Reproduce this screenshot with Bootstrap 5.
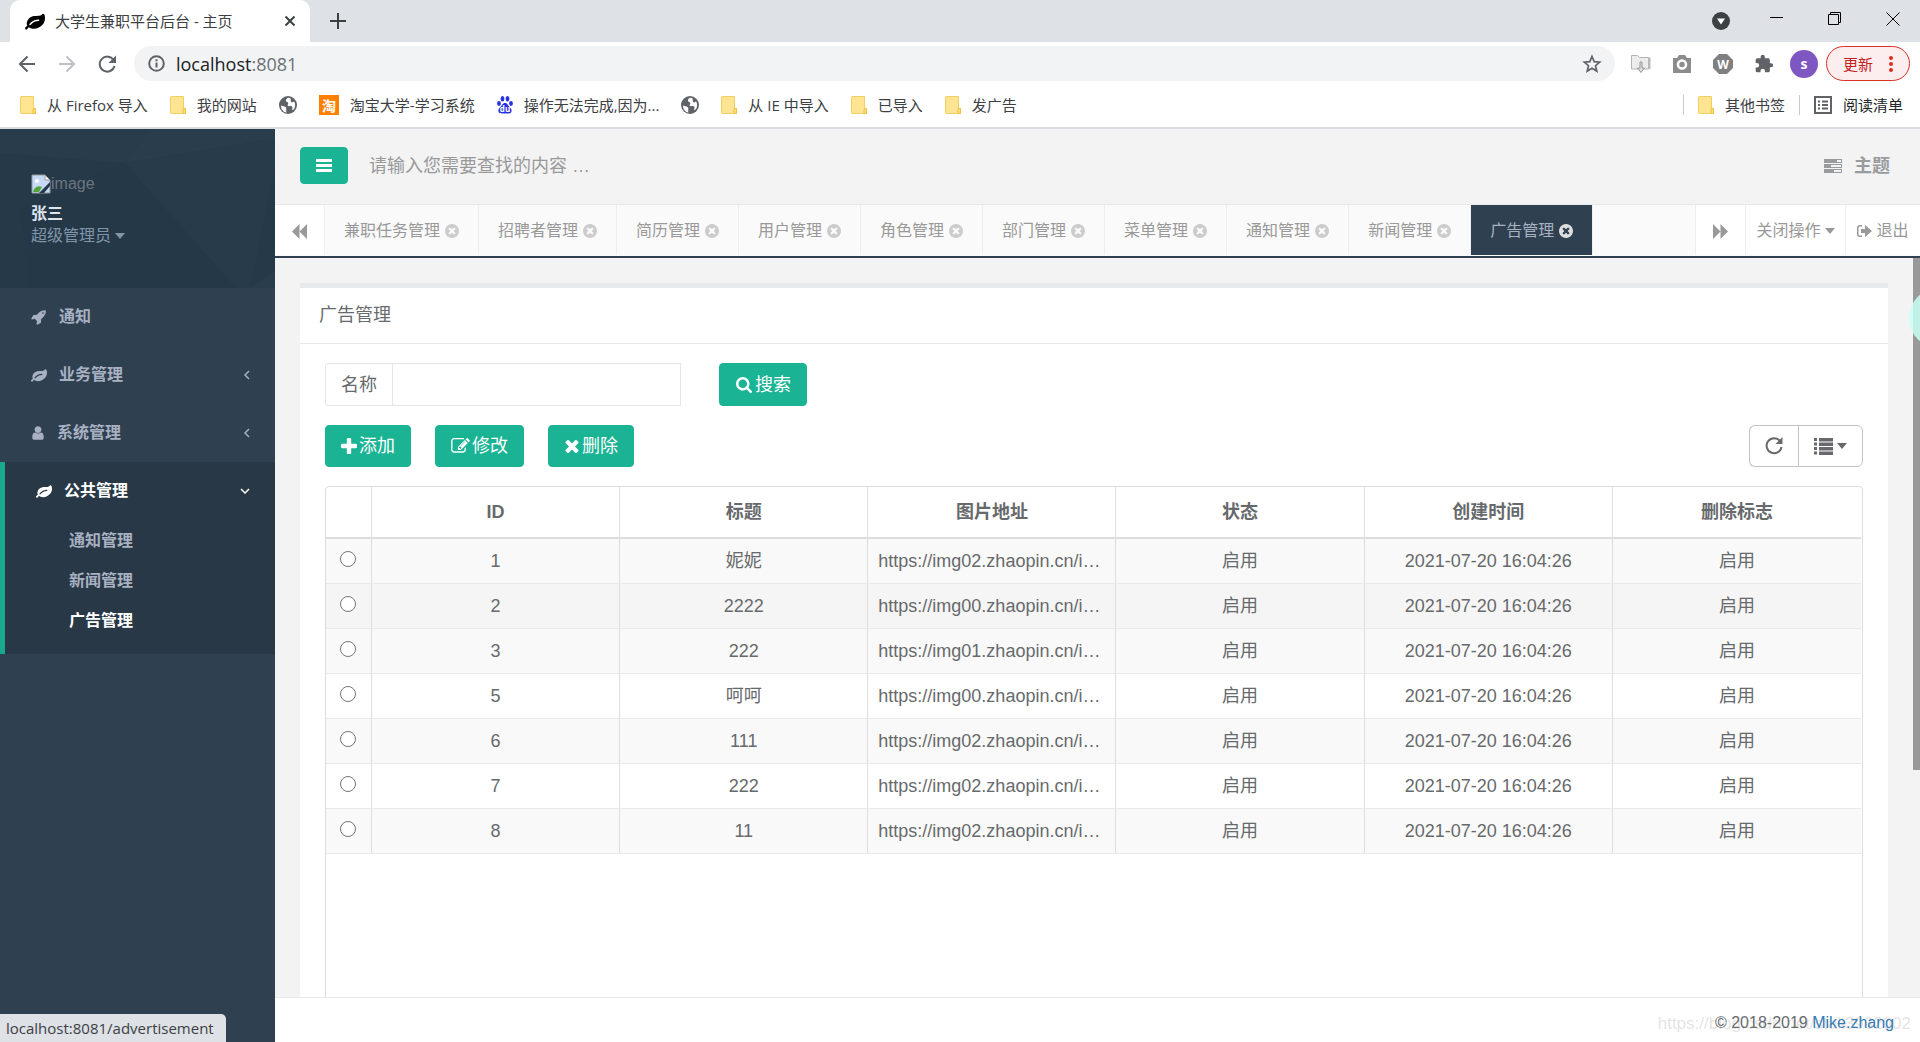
<!DOCTYPE html>
<html lang="zh-CN">
<head>
<meta charset="utf-8">
<meta name="viewport" content="width=device-width, initial-scale=1">
<title>大学生兼职平台后台 - 主页</title>
<link href="https://cdn.jsdelivr.net/npm/bootstrap@5.3.0/dist/css/bootstrap.min.css" rel="stylesheet">
<style>
body{font-family:"Liberation Sans","Noto Sans CJK SC",sans-serif;font-size:18px;line-height:24px;color:#676a6c;background:#f3f3f4;overflow:hidden}
a{text-decoration:none;color:inherit}
svg{flex:none;display:block}
.fa{width:16px;height:16px;fill:currentColor}
.fa-sm{width:14px}
/* browser frame */
.frame{font-family:"Open Sans","Noto Sans CJK SC",sans-serif;font-size:15px;line-height:20px;color:#3c4043;background:#fff;border-bottom:2px solid #d9dbe0}
.frame button{background:none;border:0;padding:0;color:inherit}
.strip{height:42px;background:#dee1e6}
.page-tab{width:300px;height:42px;margin-left:10px;padding:0 14px 0 15px;background:#fff;border-radius:10px 10px 0 0;gap:10px}
.tools{height:47px;padding:4px 10px 8px 18px}
.tools>button+button{margin-left:22px}
.omni{height:35px;border-radius:18px;background:#f1f3f4;padding:0 13px 0 14px;margin:0 15px 0 18px}
.addr{font-size:18px;margin-left:11px}
.addr a{color:#202124}
.addr span{color:#6c7074}
.avatar{width:28px;height:28px;border-radius:50%;background:#7e57c2;color:#fff;font-size:14px}
.frame .update{height:35px;width:84px;border:1px solid #d93025;border-radius:18px;background:#fceeee;color:#c5221f}
.marks{height:38px;padding:0 17px 6px 20px;gap:22px}
.marks a{display:flex;align-items:center;gap:11px;white-space:nowrap}
.marks-end{gap:14px}
.vline{width:1px;height:20px;background:#c8cbcf}
/* sidebar */
.side{width:275px;flex:none;background:#2f4050;color:#a7b1c2;font-size:16px}
.profile{position:relative;height:159px;padding:43px 31px 0;background:#263949}
.profile>.facets{position:absolute;inset:0;width:100%;height:100%}
.profile>div{position:relative}
.who{color:#dfe4ed;line-height:20px;margin-top:8px}
.role{color:#8095a8}
.side .item{display:flex;align-items:center;height:58px;padding:0 25px 0 31px;font-weight:600;gap:12px}
.side .open{background:#293846;border-left:5px solid #19aa8d;padding-bottom:14px}
.side .open .item{color:#fff}
.side .sub{display:block;height:40px;line-height:42px;padding-left:64px;font-weight:600}
.side .sub.on{color:#fff}
/* top bar and tab bar */
.topbar{height:75px;padding:0 30px 2px 25px;color:#999c9e}
.green{background:#1ab394;border:1px solid #1ab394;color:#fff;border-radius:4px}
.menu-btn{width:48px;height:37px;padding:0}
.topbar input{border:0;background:none;outline:0;width:300px;padding:0;margin-left:21px;color:#999}
.topbar input::placeholder{color:#999;opacity:1}
.tabbar{height:54px;border-top:1px solid #e7eaec;border-bottom:2px solid #2f4050;background:#fafafa;font-size:16px;color:#999;padding-bottom:1px}
.tabbar>*{height:50px}
.tabbar a,.tabbar button{display:flex;align-items:center;justify-content:center;white-space:nowrap;padding-top:2px}
.tabbar .cell{background:#fff;border:0;border-right:1px solid #eee;color:#999;padding:2px 0 0}
.tabbar .end{border-right:0;border-left:1px solid #eee}
.tabbar .ptab{padding:2px 19px 0;border-right:1px solid #eee;gap:5px}
.ptab .fa{color:#ccc}
.ptab.on{background:#2f4050;color:#a7b1c2}
.ptab.on .fa{color:#ddd}
.cell-icon{width:50px}
.cell-close{width:100px}
.cell-exit{width:75px}
/* content */
.lower{min-height:0}
.scroll{position:relative;flex:1 1 0;min-height:0;overflow:hidden;padding:25px 32px 0 25px}
.panel{background:#fff;border-top:5px solid #e7eaec}
.panel-head{height:56px;padding:0 19px;border-bottom:1px solid #e7eaec;line-height:54px}
.panel-main{padding:19px 25px 0}
.find{width:356px}
.find .input-group-text,.find .form-control{border-color:#e5e6e7;border-radius:0;background:#fff;font-size:18px;color:#676a6c;height:43px;line-height:24px}
.find .input-group-text{padding:0 15px;border-radius:3px 0 0 3px}
.find-row{gap:38px}
.act-row{margin:19px 0}
.act{height:42px;padding:0 15px;font-size:18px;line-height:24px;display:flex;align-items:center;gap:2px}
.act.tall{height:43px}
.tool{border:1px solid #c2c2c2;background:#fff;color:#676a6c;height:42px;display:flex;align-items:center;justify-content:center}
.tool-a{width:49px}
.tool-b{width:65px}
.grid-box{border:1px solid #ddd;border-radius:4px 4px 0 0;height:700px;padding-right:1px}
.data{width:100%;table-layout:fixed;margin:0;border-collapse:separate;border-spacing:0;text-align:center}
.data th{height:52px;border-bottom:2px solid #ddd;border-right:1px solid #ddd;color:#676a6c}
.data td{height:45px;border-bottom:1px solid #e7eaec;border-right:1px solid #ddd;padding:0 10px;white-space:nowrap}
.data tr>:last-child{border-right:0}
.data tbody tr:nth-child(odd){background:#f9f9f9}
.data tbody tr.hov{background:#f5f5f5}
.data input{width:16px;height:16px;margin:0 0 5px 4px;display:block}
.c0{width:46px}
.bar{position:absolute;right:0;top:0;width:7px;height:512px;background:#999}
.bubble{position:absolute;right:-49px;top:30px;width:60px;height:60px;border-radius:50%;background:rgba(200,255,244,.85)}
.foot{height:45px;border-top:1px solid #e7eaec;background:#fff;font-size:16px;padding:6px 26px 0;position:relative}
.foot a{color:#337ab7}
.wm{position:absolute;right:9px;top:14px;color:rgba(140,140,140,.25);white-space:nowrap;font-size:17px}
.status{position:fixed;left:0;bottom:0;height:28px;padding:0 12px 0 6px;background:#dee1e6;border-radius:0 5px 0 0;font:15px/29px "Open Sans",sans-serif;color:#3c4043}
</style>
<script src="https://cdn.jsdelivr.net/npm/bootstrap@5.3.0/dist/js/bootstrap.bundle.min.js"></script>
</head>
<body class="vh-100 d-flex flex-column">
<svg width="0" height="0" class="position-absolute" aria-hidden="true">
<symbol id="leaf" viewBox="0 0 1792 1792"><path d="M1280 832q0-26-19-45t-45-19q-172 0-318 49.5t-259.5 134-235.5 219.5q-19 21-19 45 0 26 19 45t45 19q24 0 45-19 27-24 74-71t67-66q137-124 268.5-176t313.5-52q26 0 45-19t19-45zm512-198q0 95-20 193-46 224-184.5 383t-357.5 268q-214 108-438 108-148 0-286-47-15-5-88-42t-96-37q-16 0-39.5 32t-45 70-52.5 70-60 32q-43 0-63.5-17.5t-45.5-59.5q-2-4-6-11t-5.5-10-3-9.5-1.5-13.5q0-35 31-73.5t68-65.5 68-56 31-48q0-4-14-38t-16-44q-9-51-9-104 0-115 43.5-220t119-184.5 170.5-139 204-95.5q55-18 145-25.5t179.5-9 178.5-6 163.5-24 113.5-56.5l29.5-29.5t29.5-28 27-20 36.5-16 43.5-4.5q39 0 70.5 46t47.5 112 24 124 8 96z"/></symbol>
<symbol id="rocket" viewBox="0 0 1792 1792"><path d="M1440 448q0-40-28-68t-68-28-68 28-28 68 28 68 68 28 68-28 28-68zm224-288q0 249-75.5 430.5t-253.5 360.5q-81 80-195 176l-20 379q-2 16-16 26l-384 224q-7 4-16 4-12 0-23-9l-64-64q-13-14-8-32l85-276-281-281-276 85q-3 1-9 1-14 0-23-9l-64-64q-17-19-5-39l224-384q10-14 26-16l379-20q96-114 176-195 188-187 358-258t431-71q14 0 24 9.5t10 22.5z"/></symbol>
<symbol id="user" viewBox="128 0 1536 1792"><path d="M1536 1399q0 109-62.5 187t-150.5 78h-854q-88 0-150.5-78t-62.5-187q0-85 8.5-160.5t31.5-152 58.5-131 94-89 134.5-34.5q131 128 313 128t313-128q76 0 134.5 34.5t94 89 58.5 131 31.5 152 8.5 160.5zm-256-887q0 159-112.5 271.5t-271.5 112.5-271.5-112.5-112.5-271.5 112.5-271.5 271.5-112.5 271.5 112.5 112.5 271.5z"/></symbol>
<symbol id="xc" viewBox="128 128 1536 1536"><path d="M1277 1122q0-26-19-45l-181-181 181-181q19-19 19-45 0-27-19-46l-90-90q-19-19-46-19-26 0-45 19l-181 181-181-181q-19-19-45-19-27 0-46 19l-90 90q-19 19-19 46 0 26 19 45l181 181-181 181q-19 19-19 45 0 27 19 46l90 90q19 19 46 19 26 0 45-19l181-181 181 181q19 19 45 19 27 0 46-19l90-90q19-19 19-46zm387-226q0 209-103 385.5t-279.5 279.5-385.5 103-385.5-103-279.5-279.5-103-385.5 103-385.5 279.5-279.5 385.5-103 385.5 103 279.5 279.5 103 385.5z"/></symbol>
<symbol id="plus" viewBox="192 128 1408 1408"><path d="M1600 736v192q0 40-28 68t-68 28h-416v416q0 40-28 68t-68 28h-192q-40 0-68-28t-28-68v-416h-416q-40 0-68-28t-28-68v-192q0-40 28-68t68-28h416v-416q0-40 28-68t68-28h192q40 0 68 28t28 68v416h416q40 0 68 28t28 68z"/></symbol>
<symbol id="times" viewBox="302 366 1188 1188"><path d="M1490 1322q0 40-28 68l-136 136q-28 28-68 28t-68-28l-294-294-294 294q-28 28-68 28t-68-28l-136-136q-28-28-28-68t28-68l294-294-294-294q-28-28-28-68t28-68l136-136q28-28 68-28t68 28l294 294 294-294q28-28 68-28t68 28l136 136q28 28 28 68t-28 68l-294 294 294 294q28 28 28 68z"/></symbol>
<symbol id="search" viewBox="64 128 1664 1664"><path d="M1216 832q0-185-131.5-316.5t-316.5-131.5-316.5 131.5-131.5 316.5 131.5 316.5 316.5 131.5 316.5-131.5 131.5-316.5zm512 832q0 52-38 90t-90 38q-54 0-90-38l-343-342q-179 124-399 124-143 0-273.5-55.5t-225-150-150-225-55.5-273.5 55.5-273.5 150-225 225-150 273.5-55.5 273.5 55.5 225 150 150 225 55.5 273.5q0 220-124 399l343 343q37 37 37 90z"/></symbol>
<symbol id="edit" viewBox="0 128 1792 1536"><path d="M888 1184l116-116-152-152-116 116v56h96v96h56zm440-720q-16-16-33 1l-350 350q-17 17-1 33t33-1l350-350q17-17 1-33zm80 594v190q0 119-84.5 203.5t-203.5 84.5h-832q-119 0-203.5-84.5t-84.5-203.5v-832q0-119 84.5-203.5t203.5-84.5h832q63 0 117 25 15 7 18 23 3 17-9 29l-49 49q-14 14-32 8-23-6-45-6h-832q-66 0-113 47t-47 113v832q0 66 47 113t113 47h832q66 0 113-47t47-113v-126q0-13 9-22l64-64q15-15 35-7t20 29zm-96-738l288 288-672 672h-288v-288zm444 132l-92 92-288-288 92-92q28-28 68-28t68 28l152 152q28 28 28 68t-28 68z"/></symbol>
<symbol id="caret" viewBox="0 0 10 6"><path d="M0 0h10L5 6z"/></symbol>
<symbol id="folder" viewBox="0 0 16 18"><path d="M1 .5h12.500v12l2 1v4H1a.8.8 0 0 1-.5-.5V1z" fill="#ffe591" stroke="#f2cf63"/><path d="M13.500 12.500h2v5h-2.500v-3.500z" fill="#fde07f" stroke="#ecc03c"/></symbol>
<symbol id="globe" viewBox="0 0 18 18"><circle cx="9" cy="9" r="9" fill="#5f6368"/><path d="M2 9.500c2 1 4 .5 5 2s-.5 2.500.5 5C4.500 16.500 1.800 13 2 9.500zM9 1.800c-1.500 1-2.500 2-2 3.200s2.300.7 2.300 2.200-1.300 1.400-.5 2.600c.9 1 3-.3 4.200.7s-.5 3 .8 3.800C16 12.500 17 9 15.300 5.700c-1.300-.2-1.800 1-2.800.6S12 3.500 11.500 2.200z" fill="#fff"/></symbol>
</svg>

<header class="frame">
  <div class="strip d-flex">
    <div class="page-tab d-flex align-items-center">
      <svg width="20" height="20" fill="#000"><use href="#leaf"/></svg>
      <span class="flex-grow-1">大学生兼职平台后台 - 主页</span>
      <button aria-label="关闭标签页"><svg width="12" height="12" stroke="#3c4043" stroke-width="2"><path d="M1.500 1.500l9 9m0-9l-9 9"/></svg></button>
    </div>
    <button class="ms-3 ps-1" aria-label="新标签页"><svg width="16" height="16" stroke="#3c4043" stroke-width="2"><path d="M8 0v16M0 8h16"/></svg></button>
    <div class="ms-auto d-flex align-items-start pt-2 pe-3">
      <button class="pt-1 me-4" aria-label="搜索标签页"><svg width="18" height="18"><circle cx="9" cy="9" r="9" fill="#3c4043"/><path d="M5 6.500h8L9 12.500z" fill="#fff"/></svg></button>
      <div class="d-flex ps-3 pe-1 pt-1">
        <button class="me-4 pe-3" aria-label="最小化"><svg width="14" height="14"><path d="M0 5.500h13" stroke="#000"/></svg></button>
        <button class="me-4 pe-3 ps-1" aria-label="还原"><svg width="14" height="14" fill="none" stroke="#000"><path d="M.5 2.500h10v10H.5zM2.500 2.500v-2h10v10h-2"/></svg></button>
        <button class="ps-1" aria-label="关闭"><svg width="14" height="14" stroke="#000"><path d="M.5.5l13 13m0-13l-13 13"/></svg></button>
      </div>
    </div>
  </div>
  <div class="tools d-flex align-items-center">
    <button aria-label="后退"><svg width="18" height="18" fill="none" stroke="#5f6368" stroke-width="2"><path d="M17 9H2m7.500-7.500L2 9l7.500 7.500"/></svg></button>
    <button aria-label="前进"><svg width="18" height="18" fill="none" stroke="#bdc1c6" stroke-width="2"><path d="M1 9h15M8.500 1.500L16 9l-7.500 7.500"/></svg></button>
    <button aria-label="刷新"><svg width="18" height="18" fill="none" stroke="#5f6368" stroke-width="2"><path d="M15.500 5A7.500 7.500 0 1 0 16.500 11"/><path d="M18 .5v7.500h-7.500z" fill="#5f6368" stroke="none"/></svg></button>
    <div class="omni flex-grow-1 d-flex align-items-center">
      <svg width="17" height="17" fill="none" stroke="#5f6368" stroke-width="2"><circle cx="8.500" cy="8.500" r="7.300"/><path d="M8.500 7.500v5M8.500 4.200v2"/></svg>
      <div class="addr flex-grow-1"><a href="#">localhost<span>:8081</span></a></div>
      <button aria-label="收藏"><svg width="20" height="20" viewBox="0 0 20 20" fill="none" stroke="#5f6368" stroke-width="1.700"><path d="M10 2.500l2.200 5.100 5.500.5-4.200 3.600 1.300 5.400-4.800-2.900-4.800 2.900 1.300-5.400-4.200-3.600 5.500-.5z"/></svg></button>
    </div>
    <div class="d-flex align-items-center gap-3 me-2">
      <svg width="22" height="20" viewBox="0 0 22 20" class="me-1"><path d="M1.500 1.500h6l2 2h9V15h-17z" fill="#ececec" stroke="#b5b5b5"/><path d="M18.500 3.500h2V15h-2z" fill="#bbb"/><path d="M10 8h2v6h2.500L11 18.500 7.500 14H10z" fill="#ddd" stroke="#999"/></svg>
      <svg width="20" height="18" viewBox="0 0 20 18" class="me-1"><path d="M1 3h4l2-3h6l2 3h4v15H1z" fill="#8c8c8c"/><circle cx="10" cy="9.500" r="4" fill="none" stroke="#fff" stroke-width="2.500"/></svg>
      <svg width="22" height="22" viewBox="0 0 22 22" class="me-1"><path d="M7 1h8l6 6v8l-6 6H7l-6-6V7z" fill="#808080"/><text x="11" y="15.500" font-size="12" font-weight="700" fill="#fff" text-anchor="middle">W</text></svg>
      <svg width="20" height="20" viewBox="0 0 24 24" fill="#5f6368"><path d="M20.500 11H19V7a2 2 0 0 0-2-2h-4V3.500a2.500 2.500 0 0 0-5 0V5H4a2 2 0 0 0-2 2v3.800h1.500a2.700 2.700 0 0 1 0 5.400H2V20a2 2 0 0 0 2 2h3.800v-1.500a2.700 2.700 0 0 1 5.400 0V22H17a2 2 0 0 0 2-2v-4h1.500a2.500 2.500 0 0 0 0-5z"/></svg>
      <span class="avatar d-flex align-items-center justify-content-center fw-bold">s</span>
    </div>
    <button class="update d-flex align-items-center justify-content-between ps-3 pe-3 ms-0">更新<svg width="4" height="16" fill="#d93025"><circle cx="2" cy="2" r="2"/><circle cx="2" cy="8" r="2"/><circle cx="2" cy="14" r="2"/></svg></button>
  </div>
  <nav class="marks d-flex align-items-center">
    <a href="#"><svg width="16" height="18"><use href="#folder"/></svg>从 Firefox 导入</a>
    <a href="#"><svg width="16" height="18"><use href="#folder"/></svg>我的网站</a>
    <a href="#" aria-label="网站"><svg width="18" height="18"><use href="#globe"/></svg></a>
    <a href="#"><svg width="20" height="20"><rect width="20" height="20" fill="#ff7f00"/><text x="10" y="15.500" font-size="14" font-weight="700" fill="#fff" text-anchor="middle">淘</text></svg>淘宝大学-学习系统</a>
    <a href="#"><svg width="16" height="18" viewBox="0 0 16 18" fill="#2932e1"><ellipse cx="2" cy="7.500" rx="1.900" ry="2.400"/><ellipse cx="5.500" cy="2.800" rx="1.900" ry="2.700"/><ellipse cx="10.500" cy="2.800" rx="1.900" ry="2.700"/><ellipse cx="14" cy="7.500" rx="1.900" ry="2.400"/><path d="M8 7c2.500 0 3 2.500 4.500 4s2.500 2.500 2 4.500-2.500 2.300-6.500 2-6 .3-6.500-2 .5-3 2-4.500S5.500 7 8 7z"/><text x="8" y="16" font-size="8" font-weight="700" fill="#fff" text-anchor="middle">du</text></svg>操作无法完成,因为...</a>
    <a href="#" aria-label="网站"><svg width="18" height="18"><use href="#globe"/></svg></a>
    <a href="#"><svg width="16" height="18"><use href="#folder"/></svg>从 IE 中导入</a>
    <a href="#"><svg width="16" height="18"><use href="#folder"/></svg>已导入</a>
    <a href="#"><svg width="16" height="18"><use href="#folder"/></svg>发广告</a>
    <div class="marks-end ms-auto d-flex align-items-center">
      <span class="vline"></span>
      <a href="#"><svg width="16" height="18"><use href="#folder"/></svg>其他书签</a>
      <span class="vline"></span>
      <a href="#" class="text-dark"><svg width="18" height="18" fill="none" stroke="#5f6368" stroke-width="2"><path d="M1 1h16v16H1zM4 5.500h2m2 0h6M4 9h2m2 0h6M4 12.500h2m2 0h6"/></svg>阅读清单</a>
    </div>
  </nav>
</header>

<div class="lower d-flex flex-grow-1">
  <aside class="side">
    <div class="profile">
      <svg class="facets" viewBox="0 0 275 159" preserveAspectRatio="none"><path d="M0 0h150L125 34 0 24z" fill="#283c4b"/><path d="M150 0h125v10L125 34z" fill="#2a3d4c"/><path d="M125 34L236 159H30L20 80z" fill="#253848"/><path d="M125 34l111 125h14l25-120V10z" fill="#273b4b"/><path d="M250 159l25-17v17z" fill="#2a3d4c"/></svg>
      <div class="d-flex align-items-center">
        <svg width="20" height="20" viewBox="0 0 20 20"><path d="M1 1h13l5 5v13H1z" fill="#c6d9f7" stroke="#9a9a9a"/><path d="M14 1v5h5z" fill="#fff" stroke="#9a9a9a"/><circle cx="6" cy="7" r="2" fill="#fff"/><path d="M2 18c1-5 5-7 9-5l-3 5z" fill="#52a43a"/><path d="M8 19l11-11v4l-6 7z" fill="#263949"/></svg>
        <span class="text-secondary">image</span>
      </div>
      <div class="who fw-bold">张三</div>
      <div class="role d-flex align-items-center">超级管理员<svg width="10" height="6" class="ms-1" fill="#8095a8"><use href="#caret"/></svg></div>
    </div>
    <nav>
      <a class="item" href="#"><svg class="fa"><use href="#rocket"/></svg>通知</a>
      <a class="item" href="#"><svg class="fa"><use href="#leaf"/></svg><span class="flex-grow-1">业务管理</span><svg width="6" height="10" fill="none" stroke="#a7b1c2" stroke-width="1.500"><path d="M5 1L1 5l4 4"/></svg></a>
      <a class="item" href="#"><svg class="fa fa-sm"><use href="#user"/></svg><span class="flex-grow-1">系统管理</span><svg width="6" height="10" fill="none" stroke="#a7b1c2" stroke-width="1.500"><path d="M5 1L1 5l4 4"/></svg></a>
      <div class="open">
        <a class="item" href="#"><svg class="fa"><use href="#leaf"/></svg><span class="flex-grow-1">公共管理</span><svg width="10" height="6" fill="none" stroke="#fff" stroke-width="1.500"><path d="M1 1l4 4 4-4"/></svg></a>
        <a class="sub" href="#">通知管理</a>
        <a class="sub" href="#">新闻管理</a>
        <a class="sub on" href="#">广告管理</a>
      </div>
    </nav>
  </aside>

  <div class="flex-grow-1 d-flex flex-column overflow-hidden">
    <div class="topbar d-flex align-items-center">
      <button class="green menu-btn d-flex align-items-center justify-content-center" aria-label="菜单"><svg width="16" height="14" fill="#fff"><path d="M0 0h16v3H0zM0 5h16v3H0zM0 10h16v3H0z"/></svg></button>
      <input type="text" aria-label="查找" placeholder="请输入您需要查找的内容 …">
      <a class="ms-auto d-flex align-items-center gap-2 fw-bold" href="#"><svg width="18" height="14" class="me-1" fill="#999c9e"><path fill-rule="evenodd" d="M0 0h18v4H0zM13 1h4v2h-4zM0 5h18v4H0zM7 6h10v2H7zM0 10h18v4H0zM10 11h7v2h-7z"/></svg>主题</a>
    </div>
    <div class="tabbar d-flex">
      <button class="cell cell-icon" aria-label="向左"><svg width="15" height="15" fill="#999"><path d="M7.500 0v15L0 7.500zM15 0v15L7.500 7.500z"/></svg></button>
      <a class="ptab" href="#">兼职任务管理<svg class="fa fa-sm"><use href="#xc"/></svg></a>
      <a class="ptab" href="#">招聘者管理<svg class="fa fa-sm"><use href="#xc"/></svg></a>
      <a class="ptab" href="#">简历管理<svg class="fa fa-sm"><use href="#xc"/></svg></a>
      <a class="ptab" href="#">用户管理<svg class="fa fa-sm"><use href="#xc"/></svg></a>
      <a class="ptab" href="#">角色管理<svg class="fa fa-sm"><use href="#xc"/></svg></a>
      <a class="ptab" href="#">部门管理<svg class="fa fa-sm"><use href="#xc"/></svg></a>
      <a class="ptab" href="#">菜单管理<svg class="fa fa-sm"><use href="#xc"/></svg></a>
      <a class="ptab" href="#">通知管理<svg class="fa fa-sm"><use href="#xc"/></svg></a>
      <a class="ptab" href="#">新闻管理<svg class="fa fa-sm"><use href="#xc"/></svg></a>
      <a class="ptab on" href="#">广告管理<svg class="fa fa-sm"><use href="#xc"/></svg></a>
      <button class="cell end cell-icon ms-auto" aria-label="向右"><svg width="15" height="15" fill="#999"><path d="M0 0v15l7.500-7.500zM7.500 0v15L15 7.500z"/></svg></button>
      <button class="cell end cell-close">关闭操作<svg width="10" height="6" class="ms-1" fill="#999"><use href="#caret"/></svg></button>
      <a class="cell end cell-exit" href="#"><svg width="15" height="13" class="me-1" fill="#999"><path d="M5 0v1.500H3Q1.500 1.500 1.500 3v6q0 1.500 1.500 1.500h2V12H3Q0 12 0 9V3q0-3 3-3z"/><path d="M4 4h4V0l7 6-7 6V8H4z"/></svg>退出</a>
    </div>
    <main class="scroll">
      <section class="panel">
        <div class="panel-head">广告管理</div>
        <div class="panel-main">
          <div class="find-row d-flex">
            <div class="input-group find">
              <label class="input-group-text" for="adname">名称</label>
              <input id="adname" class="form-control" type="text">
            </div>
            <button class="green act tall"><svg class="fa" style="width:18px"><use href="#search"/></svg>搜索</button>
          </div>
          <div class="act-row d-flex gap-4">
            <button class="green act"><svg class="fa"><use href="#plus"/></svg>添加</button>
            <button class="green act"><svg class="fa" style="width:19px"><use href="#edit"/></svg>修改</button>
            <button class="green act"><svg class="fa" style="height:13px"><use href="#times"/></svg>删除</button>
            <div class="ms-auto d-flex">
              <button class="tool tool-a rounded-start border-end-0" aria-label="刷新"><svg width="18" height="18" fill="none" stroke="#676a6c" stroke-width="2"><path d="M15 4a7.500 7.500 0 1 0 1.500 6"/><path d="M17.500 0v7h-7z" fill="#676a6c" stroke="none"/></svg></button>
              <button class="tool tool-b rounded-end" aria-label="列"><svg width="19" height="17" fill="#676a6c"><path d="M0 0h3v3H0zM5 0h14v3.500H5zM0 4.500h3v3H0zM5 4.500h14V8H5zM0 9h3v3H0zM5 9h14v3.500H5zM0 13.500h3v3H0zM5 13.500h14V17H5z"/></svg><svg width="10" height="6" class="ms-1" fill="#676a6c"><use href="#caret"/></svg></button>
            </div>
          </div>
          <div class="grid-box">
            <table class="data">
              <colgroup><col class="c0"><col><col><col><col><col><col></colgroup>
              <thead><tr><th></th><th>ID</th><th>标题</th><th>图片地址</th><th>状态</th><th>创建时间</th><th>删除标志</th></tr></thead>
              <tbody>
                <tr><td><input type="radio" name="ad" aria-label="1"></td><td>1</td><td>妮妮</td><td class="text-start">https://img02.zhaopin.cn/i…</td><td>启用</td><td>2021-07-20 16:04:26</td><td>启用</td></tr>
                <tr class="hov"><td><input type="radio" name="ad" aria-label="2"></td><td>2</td><td>2222</td><td class="text-start">https://img00.zhaopin.cn/i…</td><td>启用</td><td>2021-07-20 16:04:26</td><td>启用</td></tr>
                <tr><td><input type="radio" name="ad" aria-label="3"></td><td>3</td><td>222</td><td class="text-start">https://img01.zhaopin.cn/i…</td><td>启用</td><td>2021-07-20 16:04:26</td><td>启用</td></tr>
                <tr><td><input type="radio" name="ad" aria-label="5"></td><td>5</td><td>呵呵</td><td class="text-start">https://img00.zhaopin.cn/i…</td><td>启用</td><td>2021-07-20 16:04:26</td><td>启用</td></tr>
                <tr><td><input type="radio" name="ad" aria-label="6"></td><td>6</td><td>111</td><td class="text-start">https://img02.zhaopin.cn/i…</td><td>启用</td><td>2021-07-20 16:04:26</td><td>启用</td></tr>
                <tr><td><input type="radio" name="ad" aria-label="7"></td><td>7</td><td>222</td><td class="text-start">https://img02.zhaopin.cn/i…</td><td>启用</td><td>2021-07-20 16:04:26</td><td>启用</td></tr>
                <tr><td><input type="radio" name="ad" aria-label="8"></td><td>8</td><td>11</td><td class="text-start">https://img02.zhaopin.cn/i…</td><td>启用</td><td>2021-07-20 16:04:26</td><td>启用</td></tr>
              </tbody>
            </table>
          </div>
        </div>
      </section>
      <div class="bar"></div>
      <div class="bubble"></div>
    </main>
    <footer class="foot d-flex align-items-center justify-content-end">
      <span>© 2018-2019 <a href="#">Mike.zhang</a></span>
      <span class="wm">https://blog.csdn.net/stali3932002</span>
    </footer>
  </div>
</div>
<div class="status">localhost:8081/advertisement</div>
</body>
</html>
